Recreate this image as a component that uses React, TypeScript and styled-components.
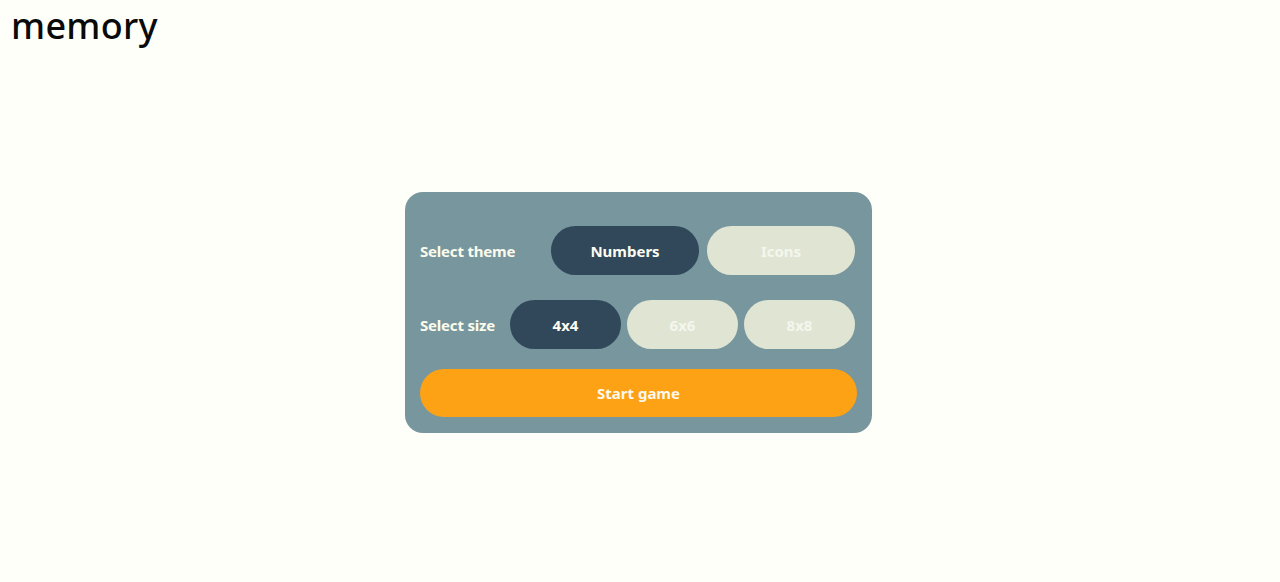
import React, { useState } from 'react'
import styled, { createGlobalStyle } from 'styled-components'

const GlobalStyle = createGlobalStyle`
  html, body {
    margin: 0;
    padding: 0;
    background: #fffffa;
    font-family: 'Noto Sans', 'Open Sans', sans-serif;
  }
`

const Page = styled.div`
  height: 582px;
  display: flex;
  flex-direction: column;
`

const Title = styled.h1`
  margin: 0;
  padding: 2px 0 0 11px;
  font-size: 36px;
  font-weight: 500;
  line-height: 48px;
  color: #0a0a0a;
  letter-spacing: 0.3px;
`

const Center = styled.main`
  display: flex;
  justify-content: center;
  padding-top: 142px;
  padding-right: 3px;
`

const Card = styled.div`
  width: 467px;
  box-sizing: border-box;
  padding: 34px 15px 16px 15px;
  background: #78969e;
  border-radius: 18px;
  display: flex;
  flex-direction: column;
`

const Row = styled.div<{ $mb: number }>`
  display: flex;
  align-items: center;
  justify-content: space-between;
  padding-right: 2px;
  margin-bottom: ${p => p.$mb}px;
`

const Label = styled.span`
  color: #fbfbeb;
  font-size: 15px;
  font-weight: 700;
  letter-spacing: -0.2px;
`

const Group = styled.div<{ $gap: number }>`
  display: flex;
  gap: ${p => p.$gap}px;
`

const Option = styled.button<{ $active: boolean; $w: number }>`
  width: ${p => p.$w}px;
  height: 49px;
  border: none;
  border-radius: 25px;
  background: ${p => (p.$active ? '#304859' : '#dfe5d2')};
  color: ${p => (p.$active ? '#fcfcf2' : '#f4f6ee')};
  font-family: inherit;
  font-size: 15px;
  font-weight: 700;
  cursor: pointer;
`

const StartButton = styled.button`
  height: 48px;
  width: 100%;
  border: none;
  border-radius: 24px;
  background: #fca214;
  color: #fcf8ec;
  font-family: inherit;
  font-size: 15px;
  font-weight: 700;
  cursor: pointer;
`

export default function App() {
  const [theme, setTheme] = useState('Numbers')
  const [size, setSize] = useState('4x4')

  return (
    <Page>
      <GlobalStyle />
      <Title>memory</Title>
      <Center>
        <Card>
          <Row $mb={25}>
            <Label>Select theme</Label>
            <Group $gap={8}>
              {['Numbers', 'Icons'].map(t => (
                <Option key={t} $w={148} $active={theme === t} onClick={() => setTheme(t)}>
                  {t}
                </Option>
              ))}
            </Group>
          </Row>
          <Row $mb={20}>
            <Label>Select size</Label>
            <Group $gap={6}>
              {['4x4', '6x6', '8x8'].map(s => (
                <Option key={s} $w={111} $active={size === s} onClick={() => setSize(s)}>
                  {s}
                </Option>
              ))}
            </Group>
          </Row>
          <StartButton>Start game</StartButton>
        </Card>
      </Center>
    </Page>
  )
}
